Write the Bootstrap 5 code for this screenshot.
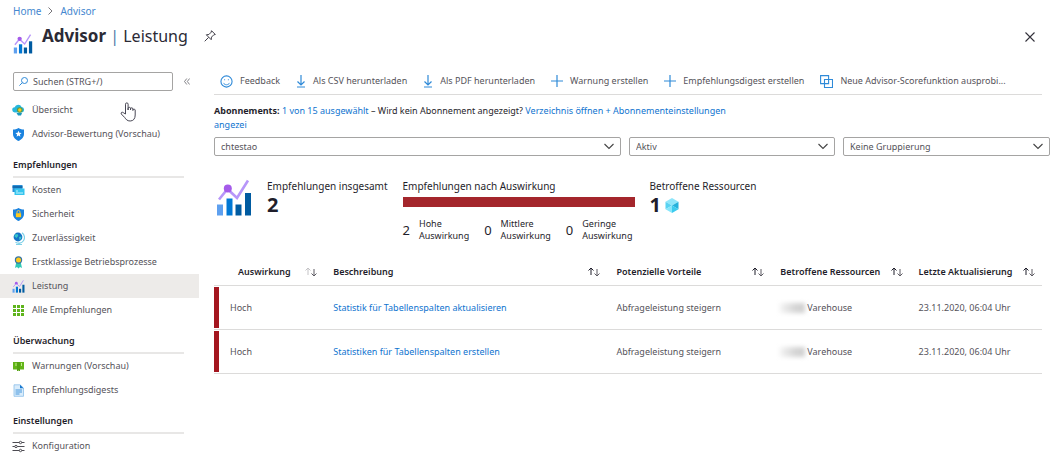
<!DOCTYPE html>
<html lang="de">
<head>
<meta charset="utf-8">
<meta name="viewport" content="width=device-width, initial-scale=1">
<title>Advisor | Leistung</title>
<link rel="stylesheet" href="https://cdn.jsdelivr.net/npm/bootstrap@5.3.0/dist/css/bootstrap.min.css">
<style>
  body { font-family: "Noto Sans", "Open Sans", sans-serif; font-size: 9px; line-height: 12px; color: #55535a; background: #fff; }
  a { color: #0f74cf; text-decoration: none; }
  svg { display: block; flex: none; }
  .ink { color: #1f1e2b; }
  .crumbs { padding: 4px 13px 0; font-size: 10px; line-height: 14px; }
  .crumbs a { color: #4587cf; }
  .crumbs svg { margin: 0 7px; }
  .head-bar { height: 49px; padding: 0 18px 0 13px; }
  .head-bar h1 { font-size: 16px; line-height: 24px; margin: 6px 0 0 9px; color: #2b2a35; font-weight: 400; }
  .head-bar h1 b { font-size: 17px; font-weight: 700; }
  .head-bar .rule { color: #4c7ba8; }
  .plain-btn { border: 0; background: none; padding: 0; color: inherit; }
  .side { width: 199px; flex: none; position: relative; padding-top: 5px; }
  .find-row { padding: 0 0 0 13px; gap: 11px; margin-bottom: 7px; }
  .find-box { width: 160px; height: 19px; border: 1px solid #a5a4a3; border-radius: 2px; padding: 0 5px; gap: 5px; }
  .find-box input { border: 0; outline: 0; padding: 0; width: 100%; min-width: 0; background: none; color: #55535a; line-height: 16px; }
  .find-box input::placeholder { color: #55535a; opacity: 1; }
  .side a { display: flex; align-items: center; height: 24px; padding-left: 12px; gap: 7px; color: #55535a; }
  .side a.active { background: #edebe9; }
  .side h2 { font-size: 9px; line-height: 12px; font-weight: 600; color: #1f1e2b; margin: 0 15px 0 13px; padding: 13px 0 5px; border-bottom: 2px solid #e8e7e6; }
  .side .hand { position: absolute; left: 120px; top: 35px; }
  .work { padding: 0 3px 0 15px; min-width: 0; }
  .tools { height: 28px; gap: 16px; padding: 1px 0 0 6px; margin-right: 8px; border-bottom: 1px solid #dcdbda; white-space: nowrap; }
  .tools button { display: flex; align-items: center; gap: 7px; }
  .subs { max-width: 530px; line-height: 14px; margin: 9px 0 5px; }
  .filters { display: grid; grid-template-columns: 407fr 206fr 207fr; gap: 8px; }
  .filters .form-select { height: 19px; padding: 0 24px 0 6px; font-size: 9px; line-height: 16px; color: #55535a; border: 1px solid #a5a4a3; border-radius: 2px; background-position: right 6px center; background-size: 10px 7px;
    background-image: url("data:image/svg+xml,%3Csvg xmlns='http://www.w3.org/2000/svg' viewBox='0 0 10 7'%3E%3Cpath d='M.5 1 5 5.5 9.500 1' fill='none' stroke='%23444' stroke-width='1.100'/%3E%3C/svg%3E"); }
  .totals { padding: 23px 0 0 2px; gap: 15px; font-size: 10px; line-height: 14px; }
  .totals .big { font-size: 20px; line-height: 24px; font-weight: 700; }
  .impact { width: 232px; }
  .impact-bar { height: 10px; background: #a4262c; margin: 4px 0 11px; }
  .legend-row { font-size: 9px; line-height: 12px; gap: 15px; }
  .legend-row > div { display: flex; align-items: center; gap: 9px; }
  .legend-row span { font-size: 13px; }
  .recs { margin: 16px 8px 0 0; }
  .recs table { width: 100%; table-layout: fixed; border-collapse: separate; border-spacing: 0; }
  .recs th { height: 28px; padding: 0; font-weight: 600; color: #1f1e2b; border-bottom: 1px solid #dcdbda; }
  .recs td { height: 44px; padding: 0; border-bottom: 1px solid #dcdbda; }
  .recs th > div { display: flex; justify-content: space-between; align-items: center; padding-right: 16px; }
  .recs th:last-child > div { padding-right: 7px; }
  .recs th:first-child > div { padding-left: 24px; }
  .flag { border-left: 5px solid #a4161f; height: 41px; display: flex; align-items: center; padding-left: 11px; }
  .masked { display: inline-block; width: 25px; height: 10px; margin-right: 2px; vertical-align: middle; background: linear-gradient(90deg, #f4f4f4, #d6d6d6 60%, #cfcfcf); filter: blur(2px); }
</style>
</head>
<body>
<svg width="0" height="0" class="position-absolute" aria-hidden="true">
  <symbol id="chart" viewBox="0 0 36 37">
    <path d="M1 25h6v11H1z" fill="#5ea0ef"/><path d="M10.500 19h6v17h-6z" fill="#0078d4"/><path d="M19.500 25h6v11h-6z" fill="#005ba1"/><path d="M29 13.500h6V36h-6z" fill="#005ba1"/>
    <path d="m3 20 8.500-10.500L21 18.500 32 1" fill="none" stroke="#b796f9" stroke-width="2.600"/><circle cx="11.800" cy="9" r="4" fill="#a55bea"/>
  </symbol>
  <symbol id="down" viewBox="0 0 10 14"><path d="M5 1v10M1.500 7.500 5 11l3.500-3.500M1 13h8" fill="none" stroke="#2f8ad8" stroke-width="1.200"/></symbol>
  <symbol id="plus" viewBox="0 0 12 12"><path d="M6 0v12M0 6h12" stroke="#2f8ad8" stroke-width="1.200"/></symbol>
  <symbol id="sort" viewBox="0 0 12 10"><path d="M3 8V1M.5 3.500 3 1l2.500 2.500" fill="none" stroke="currentColor"/><path d="M9 2v7M6.500 6.500 9 9l2.500-2.500" fill="none" stroke="#5d5b63"/></symbol>
  <symbol id="shield" viewBox="0 0 12 13"><path d="M6 0c2 1.400 3.500 1.500 5.500 1.500V6c0 3.500-2.500 5.500-5.500 7C3 11.500.5 9.500.5 6V1.500C2.500 1.500 4 1.400 6 0z" fill="#1b83df"/></symbol>
</svg>

<nav class="crumbs d-flex align-items-center" aria-label="Pfad">
  <a href="#">Home</a>
  <svg width="5" height="8" viewBox="0 0 5 8"><path d="m.5.5 3.500 3.500L.5 7.500" fill="none" stroke="#77757a"/></svg>
  <a href="#">Advisor</a>
</nav>
<header class="head-bar d-flex align-items-start">
  <svg class="mt-3" width="20" height="20"><use href="#chart"/></svg>
  <h1><b>Advisor</b> <span class="rule">|</span> Leistung</h1>
  <button class="plain-btn mt-2 pt-1 ms-3" aria-label="Anheften"><svg width="12" height="12" viewBox="0 0 12 12" fill="none" stroke="#403e48"><path d="m7.500.7 3.800 3.800-1.500.3-2.300 2.300-.3 2.600-4.900-4.900 2.600-.3L7.200 2.200zM4.600 7.400.7 11.300"/></svg></button>
  <button class="plain-btn ms-auto mt-2 pt-1" aria-label="Schließen"><svg width="10" height="14" viewBox="0 0 10 14"><path d="m.5 2.500 9 9m0-9-9 9" stroke="#33313b" stroke-width="1.100"/></svg></button>
</header>

<div class="d-flex">
  <aside class="side">
    <div class="find-row d-flex align-items-center">
      <label class="find-box d-flex align-items-center">
        <svg width="9" height="9" viewBox="0 0 9 9" fill="none" stroke="#2f8ad8"><circle cx="5.500" cy="3.500" r="3"/><path d="M3.300 5.700.4 8.600"/></svg>
        <input type="text" placeholder="Suchen (STRG+/)" aria-label="Suchen">
      </label>
      <button class="plain-btn" aria-label="Menü einklappen"><svg width="6" height="7" viewBox="0 0 6 7"><path d="M2.800.5.500 3.500l2.300 3M5.600.5 3.300 3.500l2.300 3" fill="none" stroke="#66646b" stroke-width=".8"/></svg></button>
    </div>
    <nav aria-label="Advisor">
      <a href="#"><svg width="13" height="13" viewBox="0 0 13 13"><path d="M3 8.500a2.600 2.600 0 0 1-.3-5.200A3.700 3.700 0 0 1 9.600 3a2.800 2.800 0 0 1 .4 5.500z" fill="#26b7dc"/><path d="M4.500 9h5.500l-1 2.500H6z" fill="#1897c0"/><circle cx="7.800" cy="6" r="2.800" fill="#5d9a45"/><circle cx="7.800" cy="6" r="1.700" fill="#ffca1c"/></svg>Übersicht</a>
      <a href="#"><svg width="13" height="13" viewBox="0 0 12 13"><use href="#shield"/><path d="m6 2.700.9 2.100 2.200.2-1.700 1.500.5 2.200L6 7.500 4.100 8.700l.5-2.200L2.900 5l2.200-.2z" fill="#fff"/></svg>Advisor-Bewertung (Vorschau)</a>
      <h2>Empfehlungen</h2>
      <a href="#"><svg width="13" height="13" viewBox="0 0 13 13"><path d="M.5 1h10v7h-10z" fill="#2c8fd6"/><path d="M.5 2.300h10v1.400H.5z" fill="#0a5c9e"/><path d="M2.500 4.500H12.500V11H2.500z" fill="#35c5ee"/><path d="M4 7h2M4 9h7" stroke="#c5f3ff"/></svg>Kosten</a>
      <a href="#"><svg width="13" height="13" viewBox="0 0 12 13"><use href="#shield"/><path d="M3.400 5.200h5.200v4H3.400z" fill="#ffca1c"/><path d="M4.500 5.200V4a1.500 1.500 0 0 1 3 0v1.200" fill="none" stroke="#e4c05a"/></svg>Sicherheit</a>
      <a href="#"><svg width="13" height="13" viewBox="0 0 13 13"><path d="M10 .8a5.500 5.500 0 0 1-6.500 9.400M7 10.500v2M4 12.500h6" fill="none" stroke="#7ed1e8" stroke-width="1.200"/><circle cx="6" cy="5" r="4.400" fill="#1474c6"/><path d="M3 2.500 5.500 2l.8 1.800L4.500 6 2.500 4.500zM7 5l2.500-.5-.5 2.500-1.500 1z" fill="#37c5c9"/></svg>Zuverlässigkeit</a>
      <a href="#"><svg width="13" height="13" viewBox="0 0 13 13"><path d="m4.300 6-1.300 6 2-1 1.500 1.500L6.500 7zM8.700 6l1.300 6-2-1-1.500 1.500V7z" fill="#30c9b6"/><circle cx="6.500" cy="4" r="3.700" fill="#3775a3"/><circle cx="6.500" cy="4" r="2.500" fill="#ffca1c"/></svg>Erstklassige Betriebsprozesse</a>
      <a href="#" class="active" aria-current="page"><svg width="13" height="13"><use href="#chart"/></svg>Leistung</a>
      <a href="#"><svg width="13" height="13" viewBox="0 0 13 13"><path d="M1 1h3v3H1zm4 0h3v3H5zm4 0h3v3H9zM1 5h3v3H1zm4 0h3v3H5zm4 0h3v3H9zM1 9h3v3H1zm4 0h3v3H5zm4 0h3v3H9z" fill="#5fb41c"/></svg>Alle Empfehlungen</a>
      <h2>Überwachung</h2>
      <a href="#"><svg width="13" height="13" viewBox="0 0 13 13"><path d="M1 2h5v7.500H1zm6 0h5v7.500H7z" fill="#63b519"/><path d="M5 2h3v9H7l-.5-.8-.5.800H5z" fill="#55a313"/><path d="M4 3v3M9.500 3v3" stroke="#c4eb8e"/></svg>Warnungen (Vorschau)</a>
      <a href="#"><svg width="13" height="13" viewBox="0 0 13 13"><path d="M2 .8h6L11.500 4v8.300H2z" fill="#d9ecfb" stroke="#8bbfe9" stroke-width=".8"/><path d="M8 .8V4.200h3.500z" fill="#1777cf"/><path d="M3.500 6H10M3.500 8H10M3.500 10h4" stroke="#4596dc"/></svg>Empfehlungsdigests</a>
      <h2>Einstellungen</h2>
      <a href="#"><svg width="13" height="13" viewBox="0 0 13 13" fill="#fff" stroke="#4d4b52"><path d="M.5 2.500h12M.5 6.500h12M.5 10.500h12"/><circle cx="8.500" cy="2.500" r="1.200"/><circle cx="4" cy="6.500" r="1.200"/><circle cx="8.500" cy="10.500" r="1.200"/></svg>Konfiguration</a>
    </nav>
    <svg class="hand" width="17" height="20" viewBox="0 0 17 20"><path d="M5.500 12V2.200a1.300 1.300 0 0 1 2.600 0V8V6.500a1.200 1.200 0 0 1 2.400 0V8 7a1.200 1.200 0 0 1 2.400 0v1.500V8a1.200 1.200 0 0 1 2.300 0v5c0 3.500-1.700 6-5 6-3.200 0-4.200-1.700-5.500-3.500L1.300 12c-.8-1.500.8-2.300 1.900-1.400z" fill="#fff" stroke="#494855"/></svg>
  </aside>

  <main class="work flex-grow-1">
    <div class="tools d-flex align-items-center">
      <button class="plain-btn"><svg width="13" height="13" viewBox="0 0 14 14" fill="none" stroke="#2f8ad8"><circle cx="7" cy="7" r="6" stroke-width="1.200"/><path d="M3.800 8.500c1 2.700 5.400 2.700 6.400 0"/><path d="M4.500 4.500h1v1.200h-1zm4 0h1v1.200h-1z" fill="#2f8ad8" stroke="none"/></svg>Feedback</button>
      <button class="plain-btn"><svg width="10" height="14"><use href="#down"/></svg>Als CSV herunterladen</button>
      <button class="plain-btn"><svg width="10" height="14"><use href="#down"/></svg>Als PDF herunterladen</button>
      <button class="plain-btn"><svg width="12" height="12"><use href="#plus"/></svg>Warnung erstellen</button>
      <button class="plain-btn"><svg width="12" height="12"><use href="#plus"/></svg>Empfehlungsdigest erstellen</button>
      <button class="plain-btn"><svg width="13" height="13" viewBox="0 0 13 13" fill="none" stroke="#2f8ad8" stroke-width="1.100"><path d="M.6.6h8v8h-8zM4.500 4.500h8v8h-8z"/></svg>Neue Advisor-Scorefunktion ausprobi...</button>
    </div>
    <p class="subs ink"><b>Abonnements:</b> <a href="#">1 von 15 ausgewählt</a> – Wird kein Abonnement angezeigt? <a href="#">Verzeichnis öffnen + Abonnementeinstellungen</a> <a href="#">angezei</a></p>
    <div class="filters">
      <select class="form-select" aria-label="Abonnement"><option>chtestao</option></select>
      <select class="form-select" aria-label="Status"><option>Aktiv</option></select>
      <select class="form-select" aria-label="Gruppierung"><option>Keine Gruppierung</option></select>
    </div>
    <section class="totals d-flex ink">
      <svg width="36" height="38"><use href="#chart"/></svg>
      <div>Empfehlungen insgesamt<div class="big">2</div></div>
      <div class="impact">Empfehlungen nach Auswirkung
        <div class="impact-bar"></div>
        <div class="legend-row d-flex">
          <div><span>2</span><div>Hohe<br>Auswirkung</div></div>
          <div><span>0</span><div>Mittlere<br>Auswirkung</div></div>
          <div><span>0</span><div>Geringe<br>Auswirkung</div></div>
        </div>
      </div>
      <div>Betroffene Ressourcen
        <div class="big d-flex align-items-center gap-1">1 <svg width="14" height="15" viewBox="0 0 14 15"><path d="M7 0 .5 3.700 7 7.500l6.500-3.800z" fill="#8fe6fa"/><path d="M.5 3.700v7.500L7 7.500z" fill="#58d3f2"/><path d="M.5 11.200 7 15V7.500z" fill="#86e6fb"/><path d="M13.500 3.700v7.500L7 7.500z" fill="#25b2dc"/><path d="M13.500 11.200 7 15V7.500z" fill="#3ccbee"/></svg></div>
      </div>
    </section>
    <section class="recs">
      <table>
        <colgroup><col style="width:14.4%"><col style="width:34.2%"><col style="width:19.8%"><col style="width:16.7%"><col style="width:14.9%"></colgroup>
        <thead><tr>
          <th><div>Auswirkung<svg width="12" height="10" color="#c4c3c6"><use href="#sort"/></svg></div></th>
          <th><div>Beschreibung<svg width="12" height="10"><use href="#sort"/></svg></div></th>
          <th><div>Potenzielle Vorteile<svg width="12" height="10"><use href="#sort"/></svg></div></th>
          <th><div>Betroffene Ressourcen<svg width="12" height="10"><use href="#sort"/></svg></div></th>
          <th><div>Letzte Aktualisierung<svg width="12" height="10"><use href="#sort"/></svg></div></th>
        </tr></thead>
        <tbody>
          <tr><td><div class="flag">Hoch</div></td><td><a href="#">Statistik für Tabellenspalten aktualisieren</a></td><td>Abfrageleistung steigern</td><td><span class="masked"></span>Varehouse</td><td>23.11.2020, 06:04 Uhr</td></tr>
          <tr><td><div class="flag">Hoch</div></td><td><a href="#">Statistiken für Tabellenspalten erstellen</a></td><td>Abfrageleistung steigern</td><td><span class="masked"></span>Varehouse</td><td>23.11.2020, 06:04 Uhr</td></tr>
        </tbody>
      </table>
    </section>
  </main>
</div>
<script src="https://cdn.jsdelivr.net/npm/bootstrap@5.3.0/dist/js/bootstrap.bundle.min.js"></script>
</body>
</html>
